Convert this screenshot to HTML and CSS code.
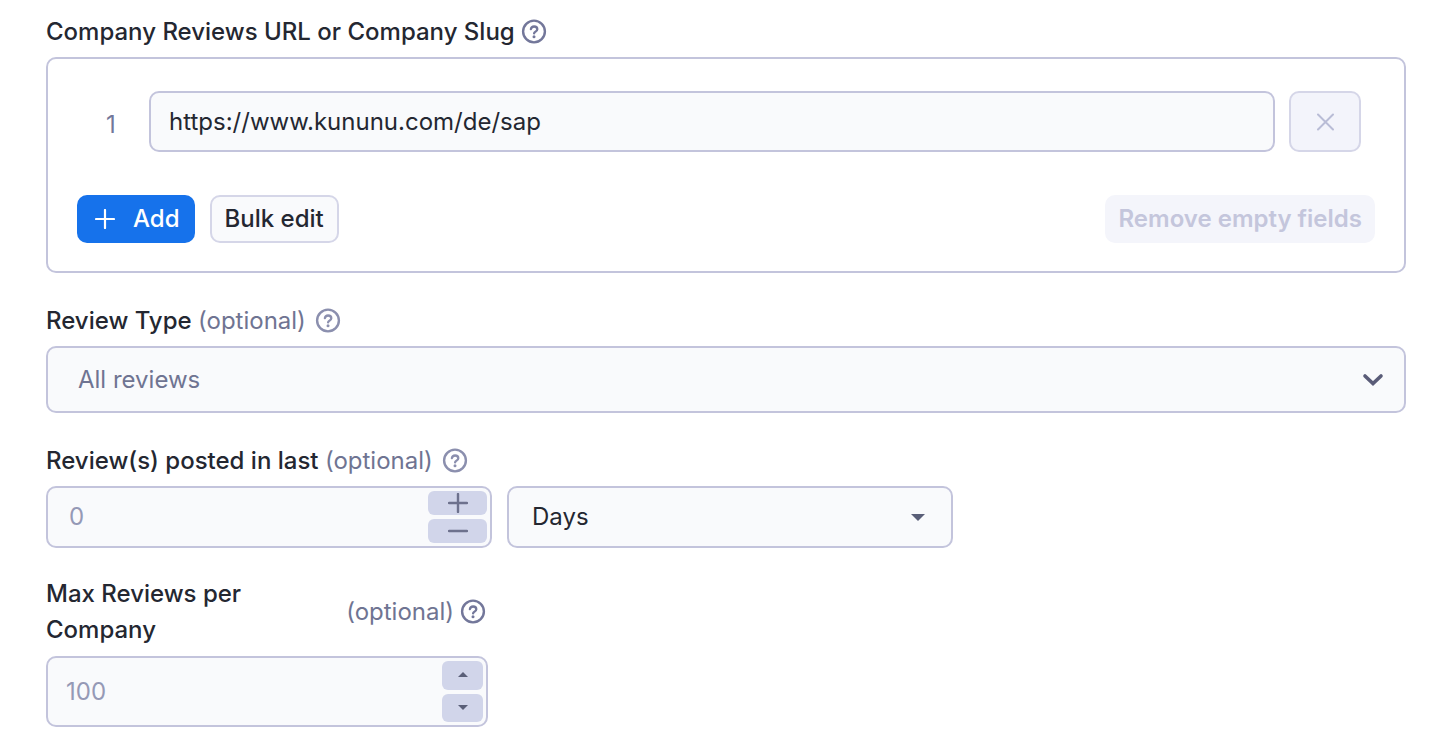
FILE: index.html
```html
<!DOCTYPE html>
<html lang="en">
<head>
    <meta charset="UTF-8">
    <meta name="viewport" content="width=device-width, initial-scale=1.0">
    <title>Input</title>
    <link rel="stylesheet" href="styles.css">
</head>
<body>
    <!-- shared icons -->
    <svg class="sprite" aria-hidden="true">
        <symbol id="icon-help" viewBox="0 0 26 26">
            <circle cx="13" cy="12.5" r="10.9" fill="none" stroke="currentColor" stroke-width="2.4"/>
            <path d="M9.9 10.1c.3-1.7 1.5-2.6 3.2-2.6 1.8 0 3.2 1 3.2 2.7 0 2.3-3.2 2.4-3.2 4.2" fill="none" stroke="currentColor" stroke-width="2.3" stroke-linecap="round"/>
            <circle cx="13" cy="17.7" r="1.5" fill="currentColor"/>
        </symbol>
    </svg>

    <form class="form">
        <div class="field">
            <div class="field-label">
                <label class="title" for="url-1">Company Reviews URL or Company Slug</label>
                <button type="button" class="help" aria-label="Help"><svg><use href="#icon-help"/></svg></button>
            </div>
            <div class="list-box">
                <div class="list-row">
                    <span class="list-index">1</span>
                    <input type="text" id="url-1" class="control list-input" value="https://www.kununu.com/de/sap">
                    <button type="button" class="remove" aria-label="Remove" disabled>
                        <svg width="18" height="18" viewBox="0 0 18 18"><path d="M2 1.5l15 15M17 1.5l-15 15" stroke="currentColor" stroke-width="2" stroke-linecap="round"/></svg>
                    </button>
                </div>
                <div class="list-actions">
                    <button type="button" class="btn btn-primary">
                        <svg width="20" height="20" viewBox="0 0 20 20"><path d="M10 1v18M1 10h18" stroke="currentColor" stroke-width="2.2" stroke-linecap="round"/></svg>
                        Add
                    </button>
                    <button type="button" class="btn btn-outline">Bulk edit</button>
                    <button type="button" class="btn btn-clear" disabled>Remove empty fields</button>
                </div>
            </div>
        </div>

        <div class="field">
            <div class="field-label">
                <label class="title" for="review-type">Review Type <span class="optional">(optional)</span></label>
                <button type="button" class="help help-light" aria-label="Help"><svg><use href="#icon-help"/></svg></button>
            </div>
            <div class="select select-type">
                <select id="review-type" class="control">
                    <option>All reviews</option>
                </select>
                <svg class="arrow" width="22" height="14" viewBox="0 0 22 14"><path d="M3 3l8 7.6L19 3" fill="none" stroke="currentColor" stroke-width="3.6" stroke-linecap="round"/></svg>
            </div>
        </div>

        <div class="field field-period">
            <div class="field-label">
                <label class="title" for="period">Review(s) posted in last <span class="optional">(optional)</span></label>
                <button type="button" class="help help-light" aria-label="Help"><svg><use href="#icon-help"/></svg></button>
            </div>
            <div class="period-row">
                <div class="control stepper">
                    <input type="text" inputmode="numeric" id="period" placeholder="0">
                    <div class="step-buttons">
                        <button type="button" aria-label="Increase"><svg width="20" height="20" viewBox="0 0 20 20"><path d="M10 1v18M1 10h18" stroke="currentColor" stroke-width="2.4" stroke-linecap="round"/></svg></button>
                        <button type="button" aria-label="Decrease"><svg width="20" height="20" viewBox="0 0 20 20"><path d="M1 10h18" stroke="currentColor" stroke-width="2.4" stroke-linecap="round"/></svg></button>
                    </div>
                </div>
                <div class="select select-unit">
                    <select class="control" aria-label="Unit">
                        <option>Days</option>
                    </select>
                    <svg class="arrow" width="14" height="7" viewBox="0 0 14 7"><path d="M0 0h14L7 7z" fill="currentColor"/></svg>
                </div>
            </div>
        </div>

        <div class="field field-limit">
            <div class="field-label">
                <label class="title" for="limit">Max Reviews per Company</label>
                <span class="optional">(optional)</span>
                <button type="button" class="help" aria-label="Help"><svg><use href="#icon-help"/></svg></button>
            </div>
            <div class="control stepper">
                <input type="text" inputmode="numeric" id="limit" placeholder="100">
                <div class="step-buttons">
                    <button type="button" aria-label="Increase"><svg width="10" height="6" viewBox="0 0 10 6"><path d="M0 5h10L5 0z" fill="currentColor"/></svg></button>
                    <button type="button" aria-label="Decrease"><svg width="10" height="6" viewBox="0 0 10 6"><path d="M0 0h10L5 5z" fill="currentColor"/></svg></button>
                </div>
            </div>
        </div>
    </form>
</body>
</html>
```
FILE: styles.css
```css
* {
    box-sizing: border-box;
}

body {
    margin: 0;
    background-color: #fff;
    color: #242731;
    font-family: Inter, "Liberation Sans", sans-serif;
    font-size: 24px;
    line-height: 36px;
}

button,
input,
select {
    margin: 0;
    padding: 0;
    border: none;
    background: none;
    color: inherit;
    font: inherit;
}

button {
    display: flex;
    align-items: center;
    justify-content: center;
    cursor: pointer;
}

button:disabled {
    cursor: default;
}

.sprite {
    display: none;
}

.form {
    padding: 14px 46px 20px;
}

.field {
    margin-bottom: 30px;
}

.field-label {
    display: flex;
    align-items: center;
    gap: 6px;
    margin-bottom: 7px;
}

.title {
    font-weight: 500;
}

.optional {
    color: #6f7492;
    font-weight: 400;
}

.help {
    flex: none;
    color: #73779a;
}

.help-light {
    margin-left: 3px;
    color: #8b8fae;
}

.help svg {
    display: block;
    width: 26px;
    height: 26px;
}

/* Text boxes and selects */
.control {
    width: 100%;
    border: 2px solid #c3c4dc;
    border-radius: 10px;
    background-color: #f9fafc;
}

/* List of URLs */
.list-box {
    padding: 32px 29px 28px;
    border: 2px solid #c3c4dc;
    border-radius: 10px;
}

.list-row {
    display: flex;
    align-items: center;
    padding-right: 14px;
    margin-bottom: 43px;
}

.list-index {
    flex: none;
    width: 72px;
    padding: 6px 4px 0 0;
    color: #73779a;
    text-align: center;
}

.list-input {
    flex: 1;
    min-width: 0;
    height: 61px;
    padding: 0 18px;
}

.remove {
    flex: none;
    width: 72px;
    height: 61px;
    margin-left: 14px;
    border: 2px solid #d5d6e8;
    border-radius: 10px;
    background-color: #f3f4fb;
    color: #b9bcd6;
}

.list-actions {
    display: flex;
    gap: 15px;
}

.btn {
    height: 48px;
    padding: 0 13px;
    border-radius: 10px;
    font-weight: 500;
}

.btn-primary {
    gap: 18px;
    padding: 0 15px 0 18px;
    background-color: #1672eb;
    color: #fff;
}

.btn-outline {
    border: 2px solid #d5d6e8;
    background-color: #f9fafc;
}

.btn-clear {
    margin-left: auto;
    background-color: #f4f5fb;
    color: #c4c6dc;
    font-weight: 600;
}

/* The arrow shares one grid cell with the select */
.select {
    display: grid;
    align-items: center;
}

.select select,
.select .arrow {
    grid-area: 1 / 1;
}

.select select {
    appearance: none;
}

.select .arrow {
    justify-self: end;
    pointer-events: none;
}

.select-type select {
    height: 67px;
    padding: 0 30px;
    color: #6f7492;
}

.select-type .arrow {
    margin-right: 22px;
    color: #5a5c78;
}

.select-unit select {
    height: 62px;
    padding: 0 23px;
}

.select-unit .arrow {
    margin-right: 28px;
    color: #5a5f78;
}

.period-row {
    display: grid;
    grid-template-columns: repeat(2, minmax(0, 1fr));
    gap: 15px;
    max-width: 907px;
}

.field-period {
    margin-bottom: 28px;
}

/* Number box with its own buttons */
.stepper {
    display: flex;
    height: 62px;
    padding: 3px;
}

.stepper input {
    flex: 1;
    min-width: 0;
    padding-left: 18px;
    outline: none;
}

.stepper input::placeholder {
    color: #9599b6;
    opacity: 1;
}

.step-buttons {
    display: flex;
    flex-direction: column;
    gap: 4px;
    width: 59px;
}

.step-buttons button {
    flex: 1;
    min-height: 0;
    border-radius: 6px;
    background-color: #d1d5ea;
    color: #6d718d;
}

.field-limit {
    max-width: 442px;
    margin-bottom: 0;
}

.field-limit .field-label {
    padding-right: 2px;
    margin-bottom: 8px;
}

.field-limit .title {
    flex: 1;
}

.field-limit .stepper {
    height: 71px;
}

.field-limit .stepper input {
    padding-left: 15px;
}

.field-limit .step-buttons {
    width: 41px;
}

.field-limit .step-buttons button {
    color: #5a5f78;
}
```
